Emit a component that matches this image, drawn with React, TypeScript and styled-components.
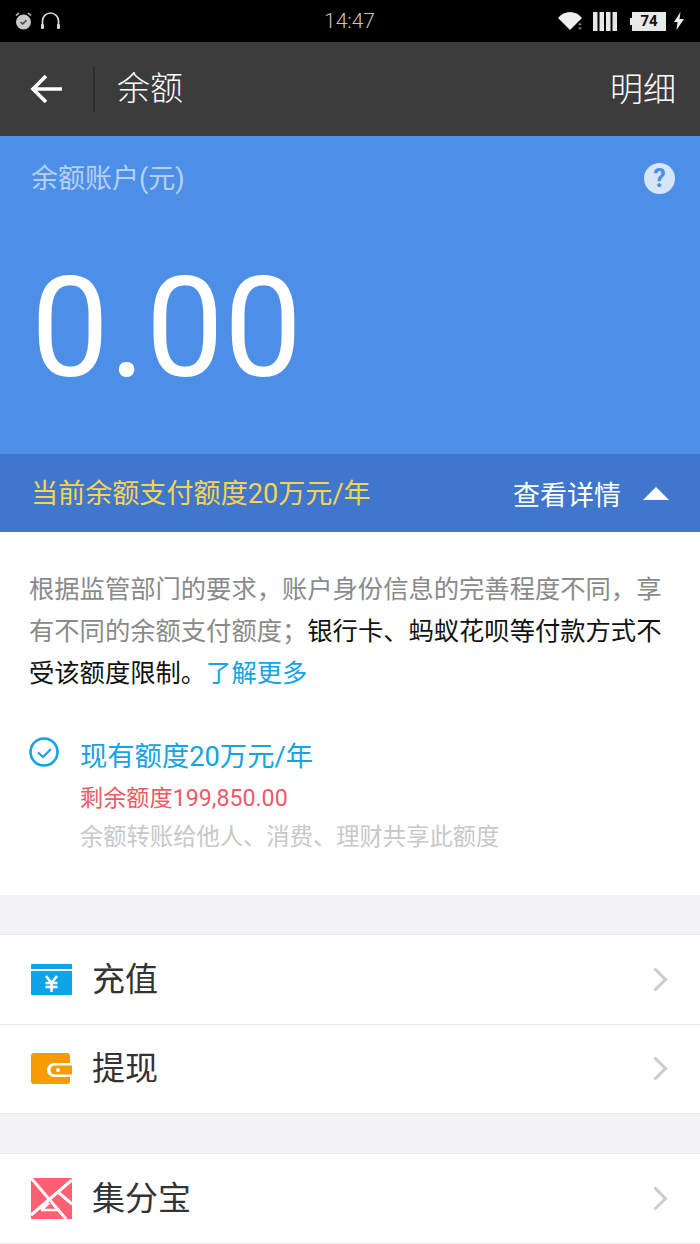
import React from 'react';
import styled, { createGlobalStyle } from 'styled-components';

const GlobalStyle = createGlobalStyle`
  html, body {
    margin: 0;
    padding: 0;
    background: #f3f3f7;
    font-family: Roboto, "Noto Sans CJK SC", sans-serif;
  }
`;

const App = () => {
  return (
    <Page>
      <GlobalStyle />
      <StatusBar>
        <StatusGroup>
          <svg width="20" height="20" viewBox="0 0 20 20">
            <circle cx="8.5" cy="11" r="7.5" fill="#c9c9c9" />
            <path d="M1 4.5 4 2M16 4.5 13 2" stroke="#c9c9c9" strokeWidth="1.6" fill="none" />
            <path d="M5.5 11l2.2 2 3.8-3.8" stroke="#444" strokeWidth="1.6" fill="none" />
          </svg>
          <svg width="22" height="20" viewBox="0 0 22 20">
            <path d="M2.5 17V10a8 8 0 0 1 16 0v7" stroke="#d6d6d6" strokeWidth="1.7" fill="none" />
            <rect x="1" y="13" width="3" height="5" rx="1" fill="#d6d6d6" />
            <rect x="17" y="13" width="3" height="5" rx="1" fill="#d6d6d6" />
          </svg>
        </StatusGroup>
        <Clock>14:47</Clock>
        <StatusRight>
          <svg width="25" height="19" viewBox="0 0 25 19">
            <path d="M0 6C6-2 18-2 24 6L12 18Z" fill="#eee" />
            <path d="M22 10.500l1.800 2.500h-3.600zM22 18l1.800-2.500h-3.600z" fill="#888" />
          </svg>
          <svg width="24" height="19" viewBox="0 0 24 19">
            <path d="M0 0h4.500v19H0zM6.500 0H11v19H6.500zM13 0h4.500v19H13zM19.500 0H24v19h-4.500z" fill="#e6e6e6" />
          </svg>
          <Battery>74</Battery>
          <svg width="10" height="18" viewBox="0 0 10 18">
            <path d="M6.500 0 0 10h3.500L2.500 18 10 7H5.500Z" fill="#eee" />
          </svg>
        </StatusRight>
      </StatusBar>

      <Header>
        <BackButton>
          <svg width="34" height="32" viewBox="0 0 34 32">
            <path d="M32 16H4M16 3 3 16l13 13" stroke="#fff" strokeWidth="3.6" fill="none" />
          </svg>
        </BackButton>
        <HeaderDivider />
        <HeaderTitle>余额</HeaderTitle>
        <HeaderAction>明细</HeaderAction>
      </Header>

      <BalancePanel>
        <BalanceTop>
          <BalanceLabel>余额账户(元)</BalanceLabel>
          <HelpIcon>?</HelpIcon>
        </BalanceTop>
        <BalanceAmount>0.00</BalanceAmount>
      </BalancePanel>

      <QuotaBanner>
        <QuotaText>当前余额支付额度20万元/年</QuotaText>
        <DetailToggle>
          查看详情
          <ToggleArrow />
        </DetailToggle>
      </QuotaBanner>

      <InfoSection>
        <Notice>
          根据监管部门的要求，账户身份信息的完善程度不同，享有不同的余额支付额度；
          <strong>银行卡、蚂蚁花呗等付款方式不受该额度限制。</strong>
          <a>了解更多</a>
        </Notice>
        <QuotaRow>
          <svg width="32" height="32" viewBox="0 0 32 32">
            <circle cx="15" cy="15" r="13.500" stroke="#14a3e3" strokeWidth="2.6" fill="none" />
            <path d="M9 15.500l5 4.500 8-8" stroke="#14a3e3" strokeWidth="2.200" fill="none" />
          </svg>
          <QuotaDetails>
            <QuotaTitle>现有额度20万元/年</QuotaTitle>
            <QuotaRemaining>剩余额度199,850.00</QuotaRemaining>
            <QuotaHint>余额转账给他人、消费、理财共享此额度</QuotaHint>
          </QuotaDetails>
        </QuotaRow>
      </InfoSection>

      <MenuGroup>
        <MenuRow>
          <svg width="41" height="31" viewBox="0 0 41 31">
            <path d="M1 0h39a1 1 0 0 1 1 1v4H0V1a1 1 0 0 1 1-1z" fill="#0ea5e6" />
            <path d="M0 7h41v23a1 1 0 0 1-1 1H1a1 1 0 0 1-1-1z" fill="#0ea5e6" />
            <path d="M15 12l5.500 7 5.500-7M14.500 19h12M14.500 23h12M20.500 18v10" stroke="#fff" strokeWidth="2.600" fill="none" />
          </svg>
          <MenuLabel>充值</MenuLabel>
          <Chevron />
        </MenuRow>
        <MenuRow>
          <svg width="41" height="31" viewBox="0 0 41 31">
            <rect width="39" height="31" rx="3" fill="#f79c00" />
            <path d="M23 10h18v14H23a7 7 0 0 1 0-14z" fill="#fff" />
            <path d="M24 12.500h17v9H24a4.500 4.500 0 0 1 0-9z" fill="#f79c00" />
            <circle cx="27" cy="17" r="2" fill="#fff" />
          </svg>
          <MenuLabel>提现</MenuLabel>
          <Chevron />
        </MenuRow>
      </MenuGroup>

      <MenuGroup>
        <MenuRow>
          <svg width="41" height="41" viewBox="0 0 41 41">
            <rect width="41" height="41" fill="#fb6172" />
            <path d="M0 0 35 41M41 2 0 37M27 14l14 12" stroke="#fff" strokeWidth="3" fill="none" />
            <path d="M18 25 10 32M10 32h19" stroke="#fff" strokeWidth="2.400" fill="none" />
          </svg>
          <MenuLabel>集分宝</MenuLabel>
          <Chevron />
        </MenuRow>
      </MenuGroup>
    </Page>
  );
};

export default App;

const Page = styled.div`
  width: 700px;
  height: 1244px;
  overflow: hidden;
  background: #f3f3f7;
`;

const StatusBar = styled.div`
  display: grid;
  grid-template-columns: 1fr auto 1fr;
  align-items: center;
  height: 42px;
  padding: 0 16px 0 15px;
  box-sizing: border-box;
  background: #000;
`;

const StatusGroup = styled.div`
  display: flex;
  align-items: center;
  gap: 5px;
`;

const StatusRight = styled(StatusGroup)`
  justify-content: flex-end;
  gap: 10px;
`;

const Clock = styled.div`
  font-size: 21px;
  font-weight: 300;
  color: #c4c4c4;
`;

const Battery = styled.div`
  position: relative;
  width: 34px;
  height: 19px;
  margin-left: 5px;
  margin-right: -2px;
  background: #e8e8e8;
  color: #111;
  font-size: 15px;
  font-weight: 700;
  line-height: 19px;
  text-align: center;

  &::before {
    content: '';
    position: absolute;
    left: -2px;
    top: 6px;
    width: 2px;
    height: 7px;
    background: #e8e8e8;
  }
`;

const Header = styled.div`
  display: flex;
  align-items: center;
  height: 94px;
  padding: 0 24px 0 30px;
  box-sizing: border-box;
  background: #3c3c3c;
  color: #fff;
`;

const BackButton = styled.div`
  display: flex;
  width: 34px;
`;

const HeaderDivider = styled.div`
  width: 2px;
  height: 46px;
  margin: 0 22px 0 29px;
  background: #2e2e2e;
`;

const HeaderTitle = styled.div`
  flex: 1;
  padding-bottom: 6px;
  font-size: 33px;
  font-weight: 300;
`;

const HeaderAction = styled.div`
  padding-bottom: 4px;
  font-size: 33px;
  font-weight: 300;
`;

const BalancePanel = styled.div`
  display: flex;
  flex-direction: column;
  height: 318px;
  padding: 26px 25px 0 31px;
  box-sizing: border-box;
  background: #4d8fe6;
`;

const BalanceTop = styled.div`
  display: flex;
  align-items: center;
  justify-content: space-between;
`;

const BalanceLabel = styled.div`
  font-size: 27px;
  line-height: 34px;
  color: #b5d1f4;
`;

const HelpIcon = styled.div`
  width: 31px;
  height: 31px;
  margin-top: -2px;
  border-radius: 50%;
  background: #d7e5f9;
  color: #4d8fe6;
  font-size: 25px;
  font-weight: 700;
  line-height: 31px;
  text-align: center;
`;

const BalanceAmount = styled.div`
  margin-top: 63px;
  font-size: 139px;
  font-weight: 400;
  line-height: 139px;
  color: #fff;
`;

const QuotaBanner = styled.div`
  display: flex;
  align-items: center;
  justify-content: space-between;
  height: 78px;
  padding: 0 31px;
  box-sizing: border-box;
  background: #4077cc;
`;

const QuotaText = styled.div`
  padding-bottom: 4px;
  font-size: 27.1px;
  color: #f7d353;
`;

const DetailToggle = styled.div`
  display: flex;
  align-items: center;
  gap: 22px;
  font-size: 27px;
  color: #fff;
`;

const ToggleArrow = styled.span`
  width: 0;
  height: 0;
  border-left: 13px solid transparent;
  border-right: 13px solid transparent;
  border-bottom: 13px solid #fff;
`;

const InfoSection = styled.div`
  height: 363px;
  padding: 37px 30px 0 29px;
  box-sizing: border-box;
  background: #fff;
`;

const Notice = styled.div`
  font-size: 25.3px;
  line-height: 42px;
  color: #8a8a8a;

  strong {
    font-weight: 400;
    color: #111;
  }

  a {
    color: #14a3e3;
  }
`;

const QuotaRow = styled.div`
  display: flex;
  gap: 19px;
  margin-top: 42px;
`;

const QuotaDetails = styled.div`
  display: flex;
  flex-direction: column;
`;

const QuotaTitle = styled.div`
  font-size: 27.3px;
  line-height: 40px;
  color: #14a3e3;
`;

const QuotaRemaining = styled.div`
  margin-top: 4px;
  font-size: 23.2px;
  line-height: 34px;
  color: #ec5b66;
`;

const QuotaHint = styled.div`
  margin-top: 5px;
  font-size: 23.3px;
  line-height: 34px;
  color: #c8c8c8;
`;

const MenuGroup = styled.div`
  display: flex;
  flex-direction: column;
  margin-top: 39px;
  border-top: 1px solid #e8e8e8;
  background: #fff;
`;

const MenuRow = styled.div`
  display: flex;
  align-items: center;
  height: 88.5px;
  padding: 0 30px 0 31px;
  border-bottom: 1px solid #e8e8e8;
`;

const MenuLabel = styled.div`
  flex: 1;
  margin-left: 20px;
  padding-bottom: 5px;
  font-size: 33px;
  color: #333;
`;

const Chevron = styled.span`
  width: 17px;
  height: 17px;
  margin-right: 6px;
  box-sizing: border-box;
  border-top: 3px solid #ccc;
  border-right: 3px solid #ccc;
  transform: rotate(45deg);
`;
